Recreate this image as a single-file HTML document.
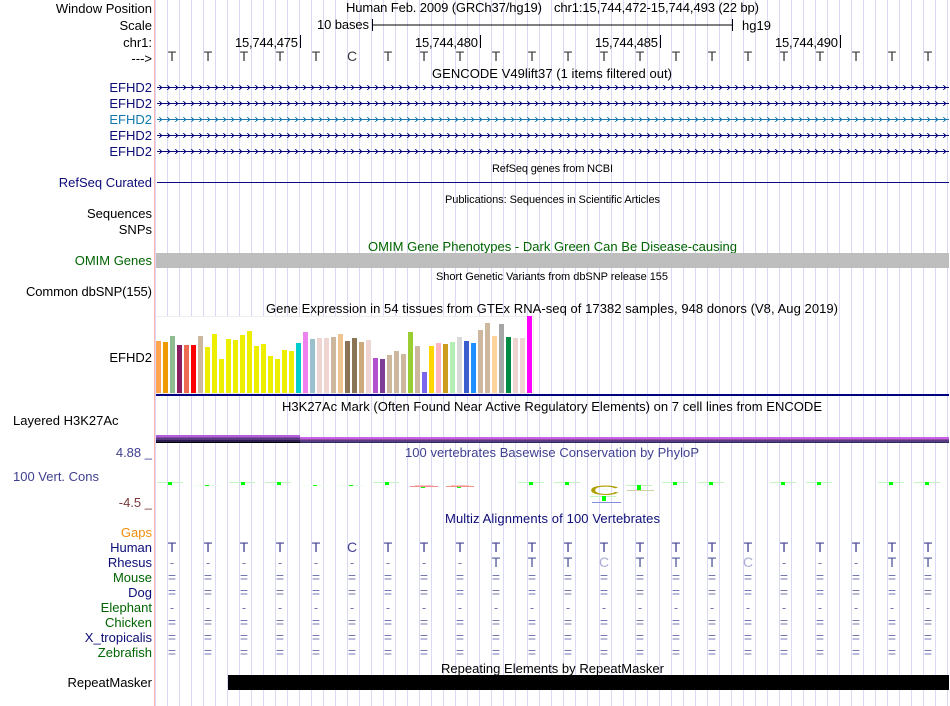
<!DOCTYPE html>
<html><head><meta charset="utf-8"><style>
html,body{margin:0;padding:0;background:#fff;width:950px;height:706px;overflow:hidden}
svg{display:block;font-family:"Liberation Sans",sans-serif;font-size:13px}
.r{text-anchor:end}.m{text-anchor:middle}.s{font-size:11px}
.n{fill:#0c0c78}.g{fill:#006400}.t{fill:#404090}
.e{fill:#7478b0}
.b{font-size:14px}
</style></head><body>
<svg width="950" height="706" viewBox="0 0 950 706" xmlns="http://www.w3.org/2000/svg">
<defs>
<pattern id="gr" patternUnits="userSpaceOnUse" x="167" y="0" width="12" height="10"><rect width="1" height="10" fill="#d9d9f3"/></pattern>
<pattern id="c1" patternUnits="userSpaceOnUse" x="159" y="84" width="8" height="16" shape-rendering="crispEdges"><g fill="#0a0a80"><rect x="0" y="1" width="1" height="1" opacity=".85"/><rect x="1" y="2" width="1" height="1"/><rect x="2" y="3" width="1" height="1"/><rect x="1" y="4" width="1" height="1"/><rect x="0" y="5" width="1" height="1" opacity=".85"/><rect x="1" y="1" width="1" height="1" opacity=".3"/><rect x="2" y="2" width="1" height="1" opacity=".45"/><rect x="2" y="4" width="1" height="1" opacity=".45"/><rect x="1" y="5" width="1" height="1" opacity=".3"/></g></pattern>
<pattern id="c2" patternUnits="userSpaceOnUse" x="159" y="116" width="8" height="16" shape-rendering="crispEdges"><g fill="#1878b0"><rect x="0" y="1" width="1" height="1" opacity=".85"/><rect x="1" y="2" width="1" height="1"/><rect x="2" y="3" width="1" height="1"/><rect x="1" y="4" width="1" height="1"/><rect x="0" y="5" width="1" height="1" opacity=".85"/><rect x="1" y="1" width="1" height="1" opacity=".3"/><rect x="2" y="2" width="1" height="1" opacity=".45"/><rect x="2" y="4" width="1" height="1" opacity=".45"/><rect x="1" y="5" width="1" height="1" opacity=".3"/></g></pattern>
</defs>
<rect x="155" y="0" width="795" height="706" fill="url(#gr)"/>
<rect x="154" y="0" width="1" height="706" fill="#ffb3b3"/>

<!-- ruler labels -->
<g class="r">
<text x="152" y="13">Window Position</text>
<text x="152" y="30">Scale</text>
<text x="152" y="47">chr1:</text>
<text x="152" y="63">---&gt;</text>
<text x="152" y="92" class="n">EFHD2</text>
<text x="152" y="108" class="n">EFHD2</text>
<text x="152" y="124" fill="#1078b0">EFHD2</text>
<text x="152" y="140" class="n">EFHD2</text>
<text x="152" y="156" class="n">EFHD2</text>
<text x="152" y="187" class="n">RefSeq Curated</text>
<text x="152" y="218">Sequences</text>
<text x="152" y="234">SNPs</text>
<text x="152" y="265" class="g">OMIM Genes</text>
<text x="152" y="296" textLength="126">Common dbSNP(155)</text>
<text x="152" y="362">EFHD2</text>
<text x="152" y="457" class="t">4.88 _</text>
<text x="152" y="507" fill="#7a3a3a">-4.5 _</text>
<text x="152" y="537" fill="#f28c0f">Gaps</text>
<text x="152" y="552" class="n">Human</text>
<text x="152" y="567" class="n">Rhesus</text>
<text x="152" y="582" class="g">Mouse</text>
<text x="152" y="597" class="n">Dog</text>
<text x="152" y="612" class="g">Elephant</text>
<text x="152" y="627" class="g">Chicken</text>
<text x="152" y="642" class="n">X_tropicalis</text>
<text x="152" y="657" class="g">Zebrafish</text>
<text x="152" y="687">RepeatMasker</text>
</g>
<text x="13" y="425">Layered H3K27Ac</text>
<text x="13" y="481" class="t" textLength="86">100 Vert. Cons</text>

<!-- header -->
<text x="346" y="12" textLength="196">Human Feb. 2009 (GRCh37/hg19)</text>
<text x="554" y="12" textLength="205">chr1:15,744,472-15,744,493 (22 bp)</text>
<text x="317" y="29" textLength="52">10 bases</text>
<path d="M372.5 19V31M372 25H733M732.5 19V31" stroke="#000" fill="none" shape-rendering="crispEdges"/>
<text x="742" y="30">hg19</text>
<text x="235" y="47" textLength="63">15,744,475</text>
<text x="415" y="47" textLength="63">15,744,480</text>
<text x="595" y="47" textLength="63">15,744,485</text>
<text x="775" y="47" textLength="63">15,744,490</text>
<path d="M300.5 35V48M480.5 35V48M660.5 35V48M840.5 35V48" stroke="#000" shape-rendering="crispEdges"/>
<text class="m b" fill="#3c3c3c" y="61" x="172 208 244 280 316 352 388 424 460 496 532 568 604 640 676 712 748 784 820 856 892 928">TTTTTCTTTTTTTTTTTTTTTT</text>

<!-- gene tracks -->
<text x="432" y="78" textLength="240">GENCODE V49lift37 (1 items filtered out)</text>
<g shape-rendering="crispEdges">
<rect x="157" y="87" width="792" height="1" fill="#0a0a80"/>
<rect x="157" y="103" width="792" height="1" fill="#0a0a80"/>
<rect x="157" y="119" width="792" height="1" fill="#1878b0"/>
<rect x="157" y="135" width="792" height="1" fill="#0a0a80"/>
<rect x="157" y="151" width="792" height="1" fill="#0a0a80"/>
</g>
<rect x="159" y="84" width="790" height="7" fill="url(#c1)"/>
<rect x="159" y="100" width="790" height="7" fill="url(#c1)"/>
<rect x="159" y="116" width="790" height="7" fill="url(#c2)"/>
<rect x="159" y="132" width="790" height="7" fill="url(#c1)"/>
<rect x="159" y="148" width="790" height="7" fill="url(#c1)"/>

<text x="492" y="172" class="s" textLength="121">RefSeq genes from NCBI</text>
<rect x="157" y="182" width="792" height="1" fill="#0a0a80" shape-rendering="crispEdges"/>
<text x="445" y="203" class="s" textLength="215">Publications: Sequences in Scientific Articles</text>
<text x="368" y="251" class="g" textLength="369">OMIM Gene Phenotypes - Dark Green Can Be Disease-causing</text>
<rect x="156" y="253" width="793" height="15" fill="#bebebe"/>
<text x="436" y="280" class="s" textLength="232">Short Genetic Variants from dbSNP release 155</text>
<text x="266" y="313" textLength="572">Gene Expression in 54 tissues from GTEx RNA-seq of 17382 samples, 948 donors (V8, Aug 2019)</text>

<!-- GTEx -->
<rect x="156" y="316" width="378" height="78" fill="#fff"/>
<path d="M156 316.5H533.5V393" stroke="#eee" fill="none" shape-rendering="crispEdges"/>
<rect x="156" y="393" width="378" height="1" fill="#eee"/>
<g shape-rendering="crispEdges">
<rect x="156" y="341" width="5" height="52" fill="#FFA54F"/>
<rect x="163" y="342" width="5" height="51" fill="#EE9A00"/>
<rect x="170" y="336" width="5" height="57" fill="#8FBC8F"/>
<rect x="177" y="345" width="5" height="48" fill="#8B1C62"/>
<rect x="184" y="345" width="5" height="48" fill="#EE6A50"/>
<rect x="191" y="345" width="5" height="48" fill="#FF0000"/>
<rect x="198" y="336" width="5" height="57" fill="#CDB79E"/>
<rect x="205" y="347" width="5" height="46" fill="#EEEE00"/>
<rect x="212" y="334" width="5" height="59" fill="#EEEE00"/>
<rect x="219" y="359" width="5" height="34" fill="#EEEE00"/>
<rect x="226" y="339" width="5" height="54" fill="#EEEE00"/>
<rect x="233" y="340" width="5" height="53" fill="#EEEE00"/>
<rect x="240" y="335" width="5" height="58" fill="#EEEE00"/>
<rect x="247" y="331" width="5" height="62" fill="#EEEE00"/>
<rect x="254" y="346" width="5" height="47" fill="#EEEE00"/>
<rect x="261" y="344" width="5" height="49" fill="#EEEE00"/>
<rect x="268" y="356" width="5" height="37" fill="#EEEE00"/>
<rect x="275" y="359" width="5" height="34" fill="#EEEE00"/>
<rect x="282" y="350" width="5" height="43" fill="#EEEE00"/>
<rect x="289" y="351" width="5" height="42" fill="#EEEE00"/>
<rect x="296" y="343" width="5" height="50" fill="#00CDCD"/>
<rect x="303" y="332" width="5" height="61" fill="#EE82EE"/>
<rect x="310" y="339" width="5" height="54" fill="#9AC0CD"/>
<rect x="317" y="338" width="5" height="55" fill="#EED5D2"/>
<rect x="324" y="338" width="5" height="55" fill="#EED5D2"/>
<rect x="331" y="337" width="5" height="56" fill="#CDB79E"/>
<rect x="338" y="334" width="5" height="59" fill="#EEC591"/>
<rect x="345" y="341" width="5" height="52" fill="#8B7355"/>
<rect x="352" y="338" width="5" height="55" fill="#8B7355"/>
<rect x="359" y="342" width="5" height="51" fill="#CDAA7D"/>
<rect x="366" y="340" width="5" height="53" fill="#EED5D2"/>
<rect x="373" y="358" width="5" height="35" fill="#B452CD"/>
<rect x="380" y="359" width="5" height="34" fill="#7D3C98"/>
<rect x="387" y="355" width="5" height="38" fill="#CDB79E"/>
<rect x="394" y="351" width="5" height="42" fill="#CDB79E"/>
<rect x="401" y="354" width="5" height="39" fill="#CDB79E"/>
<rect x="408" y="332" width="5" height="61" fill="#9ACD32"/>
<rect x="415" y="346" width="5" height="47" fill="#CDB79E"/>
<rect x="422" y="372" width="5" height="21" fill="#7A67EE"/>
<rect x="429" y="346" width="5" height="47" fill="#FFD700"/>
<rect x="436" y="343" width="5" height="50" fill="#FFB6C1"/>
<rect x="443" y="344" width="5" height="49" fill="#CD9B1D"/>
<rect x="450" y="342" width="5" height="51" fill="#B4EEB4"/>
<rect x="457" y="337" width="5" height="56" fill="#D9D9D9"/>
<rect x="464" y="341" width="5" height="52" fill="#3A5FCD"/>
<rect x="471" y="343" width="5" height="50" fill="#1E90FF"/>
<rect x="478" y="330" width="5" height="63" fill="#CDB79E"/>
<rect x="485" y="323" width="5" height="70" fill="#CDB79E"/>
<rect x="492" y="336" width="5" height="57" fill="#FFD39B"/>
<rect x="499" y="324" width="5" height="69" fill="#A6A6A6"/>
<rect x="506" y="337" width="5" height="56" fill="#008B45"/>
<rect x="513" y="338" width="5" height="55" fill="#EED5D2"/>
<rect x="520" y="338" width="5" height="55" fill="#EED5D2"/>
<rect x="527" y="316" width="5" height="77" fill="#FF00FF"/>
<rect x="156" y="394" width="793" height="2" fill="#000080"/>
</g>

<!-- H3K27Ac -->
<text x="282" y="411" textLength="540">H3K27Ac Mark (Often Found Near Active Regulatory Elements) on 7 cell lines from ENCODE</text>
<g shape-rendering="crispEdges">
<rect x="156" y="435" width="144" height="2" fill="#b060d8"/>
<rect x="156" y="437" width="144" height="1" fill="#8a4aa8"/>
<rect x="156" y="438" width="144" height="2" fill="#5a3a80"/>
<rect x="156" y="440" width="144" height="2" fill="#2c1c50"/>
<rect x="156" y="442" width="144" height="1" fill="#000"/>
<rect x="300" y="437" width="649" height="2" fill="#c860e8"/>
<rect x="300" y="439" width="649" height="1" fill="#9050a0"/>
<rect x="300" y="440" width="649" height="2" fill="#5a3a80"/>
<rect x="300" y="442" width="649" height="1" fill="#2c2c60"/>
</g>

<!-- conservation -->
<text x="405" y="457" class="t" textLength="294">100 vertebrates Basewise Conservation by PhyloP</text>
<g shape-rendering="crispEdges">
<g fill="#c4f4c4">
<rect x="157" y="482" width="26" height="1"/>
<rect x="229" y="482" width="26" height="1"/>
<rect x="265" y="482" width="26" height="1"/>
<rect x="373" y="482" width="26" height="1"/>
<rect x="518" y="482" width="26" height="1"/>
<rect x="554" y="482" width="26" height="1"/>
<rect x="590" y="496" width="26" height="1"/>
<rect x="626" y="485" width="26" height="1"/>
<rect x="662" y="482" width="26" height="1"/>
<rect x="698" y="482" width="26" height="1"/>
<rect x="770" y="482" width="26" height="1"/>
<rect x="806" y="482" width="26" height="1"/>
<rect x="878" y="482" width="26" height="1"/>
<rect x="914" y="482" width="26" height="1"/>
</g>
<g fill="#ecffec">
<rect x="194" y="485" width="26" height="1"/>
<rect x="302" y="485" width="26" height="1"/>
<rect x="338" y="485" width="26" height="1"/>
</g>
<g fill="#0f0">
<rect x="168" y="482" width="4" height="3"/>
<rect x="205" y="485" width="4" height="1"/>
<rect x="241" y="482" width="4" height="3"/>
<rect x="277" y="482" width="4" height="3"/>
<rect x="313" y="485" width="4" height="1"/>
<rect x="349" y="485" width="4" height="1"/>
<rect x="385" y="482" width="4" height="3"/>
<rect x="421" y="487" width="4" height="1"/>
<rect x="457" y="487" width="4" height="1"/>
<rect x="529" y="482" width="4" height="3"/>
<rect x="565" y="482" width="4" height="3"/>
<rect x="602" y="496" width="4" height="5"/>
<rect x="637" y="485" width="4" height="5"/>
<rect x="673" y="482" width="4" height="3"/>
<rect x="709" y="482" width="4" height="3"/>
<rect x="781" y="482" width="4" height="3"/>
<rect x="817" y="482" width="4" height="3"/>
<rect x="889" y="482" width="4" height="3"/>
<rect x="925" y="482" width="4" height="3"/>
</g>
<rect x="410" y="486" width="28" height="1" fill="#f48c8c"/>
<rect x="446" y="486" width="28" height="1" fill="#f48c8c"/>
<rect x="415" y="485" width="18" height="1" fill="#fbc4c4"/>
<rect x="451" y="485" width="18" height="1" fill="#fbc4c4"/>
<rect x="592" y="502" width="29" height="1" fill="#8888dd"/>
<rect x="627" y="490" width="27" height="1" fill="#d0cfa0"/>
</g>
<text transform="translate(589 495) scale(3.3 1.05)" fill="#b0a000" font-size="13">C</text>

<!-- multiz -->
<text x="445" y="523" class="n" textLength="215">Multiz Alignments of 100 Vertebrates</text>
<text class="m b" fill="#404090" y="552" x="172 208 244 280 316 352 388 424 460 496 532 568 604 640 676 712 748 784 820 856 892 928">TTTTTCTTTTTTTTTTTTTTTT</text>
<text class="m e" y="567" x="172 208 244 280 316 352 388 424 460 856 820 784">------------</text>
<text class="m b" fill="#50589c" y="567" x="496 532 568 640 676 712 892 928">TTTTTTTT</text>
<text class="m b" fill="#a8acd4" y="567" x="604 748">CC</text>
<text class="m e b" y="582" x="172 208 244 280 316 352 388 424 460 496 532 568 604 640 676 712 748 784 820 856 892 928">======================</text>
<text class="m e b" y="597" x="172 208 244 280 316 352 388 424 460 496 532 568 604 640 676 712 748 784 820 856 892 928">======================</text>
<text class="m e" y="612" x="172 208 244 280 316 352 388 424 460 496 532 568 604 640 676 712 748 784 820 856 892 928">----------------------</text>
<text class="m e b" y="627" x="172 208 244 280 316 352 388 424 460 496 532 568 604 640 676 712 748 784 820 856 892 928">======================</text>
<text class="m e b" y="642" x="172 208 244 280 316 352 388 424 460 496 532 568 604 640 676 712 748 784 820 856 892 928">======================</text>
<text class="m e b" y="657" x="172 208 244 280 316 352 388 424 460 496 532 568 604 640 676 712 748 784 820 856 892 928">======================</text>

<!-- repeatmasker -->
<text x="441" y="673" textLength="223">Repeating Elements by RepeatMasker</text>
<rect x="228" y="675" width="721" height="15" fill="#000"/>
</svg>
</body></html>
